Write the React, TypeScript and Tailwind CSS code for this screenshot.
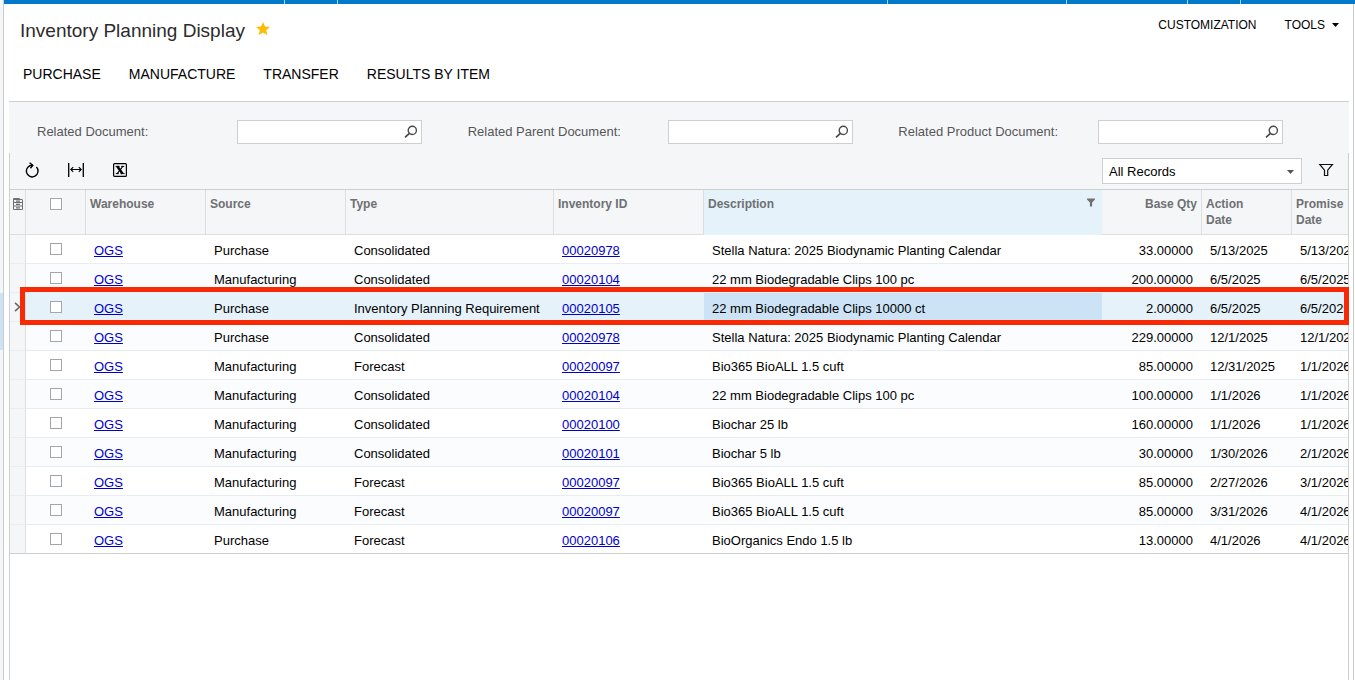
import React, { useState } from 'react';

interface PlanRow {
  source: string;
  type: string;
  inventoryId: string;
  description: string;
  qty: string;
  actionDate: string;
  promiseDate: string;
}

const ROWS: PlanRow[] = [
  { source: 'Purchase', type: 'Consolidated', inventoryId: '00020978', description: 'Stella Natura: 2025 Biodynamic Planting Calendar', qty: '33.00000', actionDate: '5/13/2025', promiseDate: '5/13/2025' },
  { source: 'Manufacturing', type: 'Consolidated', inventoryId: '00020104', description: '22 mm Biodegradable Clips 100 pc', qty: '200.00000', actionDate: '6/5/2025', promiseDate: '6/5/2025' },
  { source: 'Purchase', type: 'Inventory Planning Requirement', inventoryId: '00020105', description: '22 mm Biodegradable Clips 10000 ct', qty: '2.00000', actionDate: '6/5/2025', promiseDate: '6/5/2025' },
  { source: 'Purchase', type: 'Consolidated', inventoryId: '00020978', description: 'Stella Natura: 2025 Biodynamic Planting Calendar', qty: '229.00000', actionDate: '12/1/2025', promiseDate: '12/1/2025' },
  { source: 'Manufacturing', type: 'Forecast', inventoryId: '00020097', description: 'Bio365 BioALL 1.5 cuft', qty: '85.00000', actionDate: '12/31/2025', promiseDate: '1/1/2026' },
  { source: 'Manufacturing', type: 'Consolidated', inventoryId: '00020104', description: '22 mm Biodegradable Clips 100 pc', qty: '100.00000', actionDate: '1/1/2026', promiseDate: '1/1/2026' },
  { source: 'Manufacturing', type: 'Consolidated', inventoryId: '00020100', description: 'Biochar 25 lb', qty: '160.00000', actionDate: '1/1/2026', promiseDate: '1/1/2026' },
  { source: 'Manufacturing', type: 'Consolidated', inventoryId: '00020101', description: 'Biochar 5 lb', qty: '30.00000', actionDate: '1/30/2026', promiseDate: '2/1/2026' },
  { source: 'Manufacturing', type: 'Forecast', inventoryId: '00020097', description: 'Bio365 BioALL 1.5 cuft', qty: '85.00000', actionDate: '2/27/2026', promiseDate: '3/1/2026' },
  { source: 'Manufacturing', type: 'Forecast', inventoryId: '00020097', description: 'Bio365 BioALL 1.5 cuft', qty: '85.00000', actionDate: '3/31/2026', promiseDate: '4/1/2026' },
  { source: 'Purchase', type: 'Forecast', inventoryId: '00020106', description: 'BioOrganics Endo 1.5 lb', qty: '13.00000', actionDate: '4/1/2026', promiseDate: '4/1/2026' },
];

const TABS = ['PURCHASE', 'MANUFACTURE', 'TRANSFER', 'RESULTS BY ITEM'];

const App: React.FC = () => {
  const [selected, setSelected] = useState(2);

  return (
    <div className="flex min-h-screen bg-white font-['Liberation_Sans',Arial,sans-serif] text-[13px] text-black">
      {/* Collapsed side menu */}
      <div className="w-1 shrink-0 border-r border-[#c9cbce] bg-[#f5f6f8] pt-[293px]">
        <div className="h-[57px] bg-[#cde3f5]" />
      </div>

      <div className="flex min-w-0 flex-1 flex-col">
        <div className="flex h-1 bg-[#027acc]">
          <div className="w-[281px] border-r border-[#a8d8f5]" />
          <div className="w-[53px] border-r border-[#a8d8f5]" />
          <div className="flex-1 border-r border-[#a8d8f5]" />
          <div className="w-[179px] border-r border-[#a8d8f5]" />
          <div className="w-[121px] border-r border-[#a8d8f5]" />
          <div className="w-[53px] border-r border-[#a8d8f5]" />
          <div className="w-[114px]" />
        </div>

        <main className="mr-px flex flex-1 flex-col border-r border-[#c9cbce] pr-1 pl-[5px]">
          <header className="pt-3 pr-[10px] pb-[13px] pl-[11px]">
            <div className="flex items-start justify-between">
              <div className="flex items-center gap-[11px]">
                <h1 className="text-[19px] leading-[30px] text-[#2b2b2b]">Inventory Planning Display</h1>
                <button aria-label="Favorite" className="pb-1">
                  <StarIcon />
                </button>
              </div>
              <div className="flex gap-7 text-xs leading-[18px]">
                <button>CUSTOMIZATION</button>
                <button className="flex items-center gap-[7px]">
                  TOOLS
                  <CaretIcon />
                </button>
              </div>
            </div>
            <nav className="mt-[14px] flex gap-7 pl-[3px] text-sm leading-7">
              {TABS.map(tab => (
                <button key={tab}>{tab}</button>
              ))}
            </nav>
          </header>

          {/* Selection area */}
          <section className="grid grid-cols-3 border-t border-[#cdcfd1] bg-[#f5f6f8] pt-[18px] pr-5 pb-[9px] pl-7">
            <FilterField id="related-doc" label="Related Document:" />
            <FilterField id="related-parent" label="Related Parent Document:" />
            <FilterField id="related-product" label="Related Product Document:" />
          </section>

          <section className="flex flex-1 flex-col border-x border-[#cdcfd1]">
            <div className="flex items-center justify-between border-b border-[#cdcfd1] bg-[#f5f6f8] py-[5px] pr-[14px] pl-[14px]">
              <div className="flex items-center gap-7 pb-[2px]">
                <button aria-label="Refresh" className="flex size-4 items-center justify-center"><RefreshIcon /></button>
                <button aria-label="Fit to screen" className="flex size-4 items-center justify-center"><FitIcon /></button>
                <button aria-label="Export to Excel" className="flex size-4 items-center justify-center"><ExcelIcon /></button>
              </div>
              <div className="flex items-center gap-4">
                <div className="relative">
                  <select
                    aria-label="Filter"
                    className="block h-[26px] w-[200px] appearance-none border border-[#cdcfd1] bg-white pt-[2px] pl-[6px] text-[13px]"
                  >
                    <option>All Records</option>
                  </select>
                  <span className="pointer-events-none absolute top-3 right-2 text-[#555]">
                    <CaretIcon />
                  </span>
                </div>
                <button aria-label="Filter settings" className="pb-[2px]"><FunnelIcon /></button>
              </div>
            </div>

            <div className="relative">
              <div className="overflow-hidden">
                <table className="w-[1372px] min-w-full table-fixed border-separate border-spacing-0">
                  <colgroup>
                    <col className="w-4" />
                    <col className="w-[60px]" />
                    <col className="w-[120px]" />
                    <col className="w-[140px]" />
                    <col className="w-[208px]" />
                    <col className="w-[150px]" />
                    <col />
                    <col className="w-[100px]" />
                    <col className="w-[90px]" />
                    <col className="w-[90px]" />
                  </colgroup>
                  <thead className="bg-[#f5f6f8] text-left text-xs leading-4 text-[#6e7072]">
                    <tr className="h-[45px]">
                      <th className="border-r border-b border-[#dcdee0] pt-2 pl-[3px] align-top">
                        <FilesIcon />
                      </th>
                      <th className="border-r border-b border-[#dcdee0] pt-2 align-top">
                        <Tick label="Select all" />
                      </th>
                      <HeadCell>Warehouse</HeadCell>
                      <HeadCell>Source</HeadCell>
                      <HeadCell>Type</HeadCell>
                      <HeadCell>Inventory ID</HeadCell>
                      <th className="border-b border-[#e5f2fa] bg-[#e5f2fa] pt-[6px] pr-[7px] pl-1 align-top">
                        <div className="flex items-start justify-between">
                          Description
                          <FilterMark />
                        </div>
                      </th>
                      <th className="border-r border-b border-[#dcdee0] pt-[6px] pr-1 text-right align-top">Base Qty</th>
                      <HeadCell>Action<br />Date</HeadCell>
                      <HeadCell>Promise<br />Date</HeadCell>
                    </tr>
                  </thead>
                  <tbody>
                    {ROWS.map((row, i) => (
                      <GridRow
                        key={i}
                        row={row}
                        alt={i % 2 === 1}
                        last={i === ROWS.length - 1}
                        active={i === selected}
                        onSelect={() => setSelected(i)}
                      />
                    ))}
                  </tbody>
                </table>
              </div>
              {/* Callout around the planning requirement line */}
              <div className="pointer-events-none absolute top-[97px] -right-px left-[10px] h-[38px] border-5 border-[#f72a05]" />
            </div>
          </section>
        </main>
      </div>
    </div>
  );
};

const FilterField: React.FC<{ id: string; label: string }> = ({ id, label }) => (
  <div className="flex items-center">
    <label htmlFor={id} className="w-[200px] shrink-0 text-[#555759]">{label}</label>
    <div className="flex h-6 w-[185px] items-center border border-[#cdcfd1] bg-white pr-[3px]">
      <input id={id} type="text" className="min-w-0 flex-1 px-1 outline-none" />
      <button aria-label={`Look up ${label}`}><SearchIcon /></button>
    </div>
  </div>
);

const HeadCell: React.FC<{ children: React.ReactNode }> = ({ children }) => (
  <th className="border-r border-b border-[#dcdee0] pt-[6px] pl-1 align-top">{children}</th>
);

const Tick: React.FC<{ label: string }> = ({ label }) => (
  <input
    type="checkbox"
    aria-label={label}
    className="mx-auto block size-3 appearance-none border border-[#a3a5a7] bg-white checked:bg-[#027acc]"
  />
);

const GridRow: React.FC<{
  row: PlanRow;
  alt: boolean;
  last: boolean;
  active: boolean;
  onSelect: () => void;
}> = ({ row, alt, last, active, onSelect }) => {
  const line = last ? 'border-b border-[#cdcfd1]' : 'border-b border-[#e6eef3]';
  const cell = `${line} pt-[3px] pl-2 whitespace-nowrap`;

  return (
    <tr
      onClick={onSelect}
      className={`h-[29px] ${active ? 'bg-[#e5f2fa]' : alt ? 'bg-[#fafcfe]' : 'bg-white'}`}
    >
      <td className={`border-r border-r-[#dcdee0] bg-[#f5f6f8] pl-1 ${line}`}>{active && <RowMark />}</td>
      <td className={line}>
        <Tick label={`Select ${row.inventoryId}`} />
      </td>
      <td className={cell}><a href="#warehouse" className="text-[#0000cc] underline">OGS</a></td>
      <td className={cell}>{row.source}</td>
      <td className={cell}>{row.type}</td>
      <td className={cell}><a href="#item" className="text-[#0000cc] underline">{row.inventoryId}</a></td>
      <td className={`${cell} ${active ? 'bg-[#cbe3f5]' : ''}`}>{row.description}</td>
      <td className={`${cell} pr-[9px] text-right`}>{row.qty}</td>
      <td className={cell}>{row.actionDate}</td>
      <td className={cell}>{row.promiseDate}</td>
    </tr>
  );
};

const StarIcon = () => (
  <svg width="14" height="14" viewBox="0 0 14 14" fill="#fbbc05" className="block">
    <path d="M7 0l2 4.6 5 .4-3.8 3.3 1.2 4.9L7 10.6l-4.4 2.6 1.2-4.9L0 5l5-.4z" />
  </svg>
);

const CaretIcon = () => (
  <svg width="7" height="4" viewBox="0 0 7 4" fill="currentColor" className="block">
    <path d="M0 0h7L3.5 4z" />
  </svg>
);

const SearchIcon = () => (
  <svg width="14" height="14" viewBox="0 0 14 14" fill="none" stroke="#4a4a4a" className="block">
    <circle cx="8.3" cy="5.4" r="4.1" strokeWidth="1.4" />
    <path d="M5.4 8.3L1 12.4" strokeWidth="1.7" />
  </svg>
);

const RefreshIcon = () => (
  <svg width="16" height="16" viewBox="0 0 16 16" fill="none" stroke="#000" strokeWidth="1.4" className="block">
    <path d="M12.4 5.1A5.8 5.8 0 1 1 8.4 3.3" />
    <path d="M5.6.7l3.2 2.6-2.4 2.9" />
  </svg>
);

const FitIcon = () => (
  <svg width="16" height="16" viewBox="0 0 16 16" fill="none" stroke="#000" className="block">
    <path d="M.7 1v14M15.3 1v14" strokeWidth="1.3" />
    <path d="M2.8 7.5h10.4M5.2 5.2L2.8 7.5l2.4 2.3M10.8 5.2l2.4 2.3-2.4 2.3" strokeWidth="1.1" />
  </svg>
);

// spreadsheet mark: crossed strokes with serifs inside a frame
const ExcelIcon = () => (
  <svg width="14" height="14" viewBox="0 0 14 14" fill="none" stroke="#000" className="block">
    <rect x=".6" y=".6" width="12.8" height="12.8" rx="1" strokeWidth="1.2" />
    <path d="M4.2 3.2l5.4 7.6" strokeWidth="2.4" />
    <path d="M10 3.2L4 10.8" strokeWidth="1.1" />
    <path d="M2.6 3.4h4M8.2 3.4h3M2.8 10.6h3M7.6 10.6h4" strokeWidth="1" />
  </svg>
);

const FunnelIcon = () => (
  <svg width="16" height="16" viewBox="0 0 16 16" fill="none" stroke="#111" strokeWidth="1.2" className="block">
    <path d="M1.8 2.5h12.6L9.7 8.2v5.3H6.5V8.2z" />
  </svg>
);

const FilterMark = () => (
  <svg width="8" height="12" viewBox="0 0 8 12" fill="#6e7072" className="block">
    <path d="M0 2.4h8v1.2L5.1 6.4v4.2H2.9V6.4L0 3.6z" />
  </svg>
);

const FilesIcon = () => (
  <svg width="10" height="12" viewBox="0 0 10 12" fill="none" stroke="#6e7072" className="block">
    <path d="M.5 2v9.5h9V2M.5 2V.5h6v1M.5 1.5h9M.5 4.5h9M.5 8h9" />
    <path d="M3 3.2h4M3 6.4h4M3 9.8h4" strokeWidth="1.2" />
  </svg>
);

const RowMark = () => (
  <svg width="8" height="10" viewBox="0 0 8 10" fill="none" stroke="#666" strokeWidth="1.6" className="block">
    <path d="M1 .8L5.5 5 1 9.2" />
  </svg>
);

export default App;
